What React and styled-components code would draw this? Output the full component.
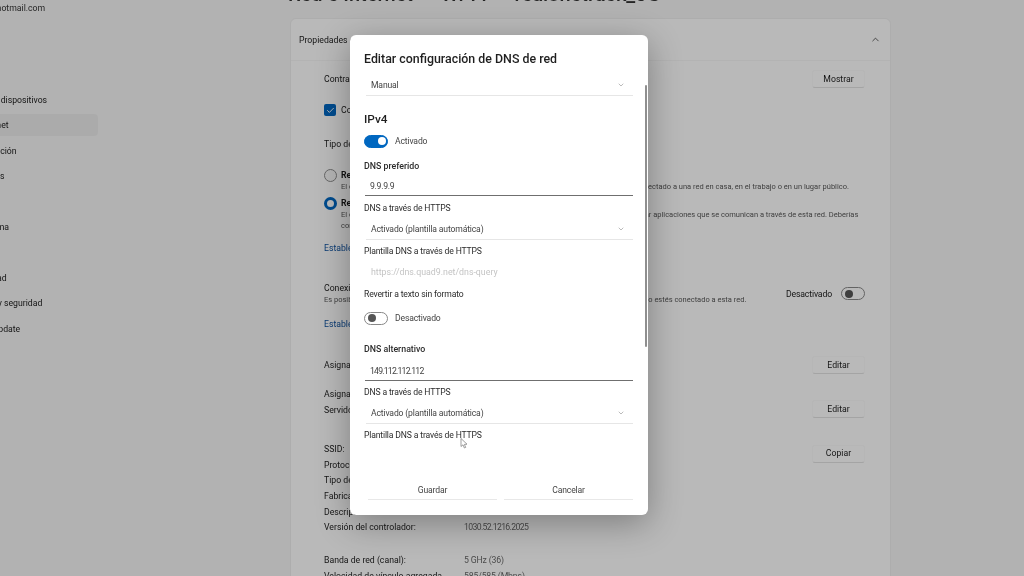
import React from 'react';
import styled, { createGlobalStyle } from 'styled-components';
import { Check, ChevronDown, ChevronUp } from 'lucide-react';

const GlobalStyle = createGlobalStyle`
  html, body {
    margin: 0;
    padding: 0;
    overflow: hidden;
    background: #f3f3f3;
  }
  * {
    box-sizing: border-box;
  }
`;

const Window = styled.div`
  position: relative;
  width: 1024px;
  height: 576px;
  overflow: hidden;
  display: grid;
  grid-template-columns: 290px 601px;
  background: #f3f3f3;
  color: #1b1b1b;
  font-family: Roboto, 'Open Sans', sans-serif;
  font-size: 8.7px;
  filter: blur(0.4px);
`;

/* sidebar, cut off by the left edge of the capture */
const Sidebar = styled.nav`
  overflow: hidden;
`;

const Account = styled.div`
  margin-left: -40px;
  padding-top: 2px;
  height: 14px;
  line-height: 12px;
  font-size: 8.7px;
  color: #333;
`;

const NavList = styled.div`
  margin-top: 75px;
  display: flex;
  flex-direction: column;
  gap: 3.4px;
`;

const NavItem = styled.div`
  width: 98px;
  height: 22px;
  display: flex;
  align-items: center;
  border-radius: 0 4px 4px 0;
  white-space: nowrap;
  font-size: 8.7px;
  background: ${(p) => (p.$active ? '#eaeaea' : 'transparent')};

  span {
    margin-left: -45px;
  }
`;

const Main = styled.main`
  display: flex;
  flex-direction: column;
  min-height: 0;
`;

const Breadcrumb = styled.h1`
  flex: none;
  margin: -19px 0 0 -2px;
  height: 37px;
  display: flex;
  gap: 28px;
  font-size: 20px;
  line-height: 27px;
  font-weight: 500;
  white-space: nowrap;
  color: #333;
`;

const Card = styled.section`
  flex: none;
  background: #fdfdfd;
  border-radius: 6px 6px 0 0;
  border: 1px solid #ececec;
  height: 640px;
`;

const CardHeader = styled.header`
  height: 42px;
  padding: 0 9px 0 8px;
  display: flex;
  align-items: center;
  justify-content: space-between;
  border-bottom: 1px solid #f4f4f4;
`;

const CardBody = styled.div`
  padding: 0 25px 0 33px;
  display: flex;
  flex-direction: column;
`;

const Row = styled.div`
  margin-top: ${(p) => p.$top || 0}px;
  display: flex;
  justify-content: space-between;
  align-items: ${(p) => p.$align || 'center'};
`;

const Line = styled.div`
  margin-top: ${(p) => p.$top || 0}px;
  height: 14px;
  line-height: 14px;
  white-space: nowrap;
`;

const CheckLine = styled(Line)`
  display: flex;
  align-items: center;
  gap: 5px;
`;

const CheckBox = styled.span`
  width: 12px;
  height: 12px;
  border-radius: 2px;
  background: #0067c0;
  color: #fff;
  display: flex;
  align-items: center;
  justify-content: center;
`;

const RadioRow = styled.div`
  margin-top: ${(p) => p.$top}px;
  display: grid;
  grid-template-columns: 12px 1fr;
  column-gap: 5px;
  align-items: start;
`;

const Radio = styled.span`
  width: 13px;
  height: 13px;
  border-radius: 50%;
  background: ${(p) => (p.$on ? '#fff' : '#f6f6f6')};
  border: ${(p) => (p.$on ? '3.5px solid #0067c0' : '1px solid #8c8c8c')};
`;

const OptionTitle = styled.div`
  line-height: 12px;
  font-weight: ${(p) => (p.$plain ? 400 : 700)};
`;

const Hint = styled.div`
  line-height: 11px;
  font-size: 7.5px;
  color: #555;
  white-space: nowrap;
`;

const LinkLine = styled(Line)`
  color: #0c4f9c;
`;

const Switch = styled.span`
  position: relative;
  flex: none;
  width: 24px;
  height: 13px;
  border-radius: 7px;
  border: 1px solid ${(p) => (p.$on ? '#0067c0' : '#888')};
  background: ${(p) => (p.$on ? '#0067c0' : 'transparent')};

  &::after {
    content: '';
    position: absolute;
    top: 1.5px;
    left: ${(p) => (p.$on ? '12.5px' : '2.5px')};
    width: 8px;
    height: 8px;
    border-radius: 50%;
    background: ${(p) => (p.$on ? '#fff' : '#555')};
  }
`;

const SwitchGroup = styled.div`
  display: flex;
  align-items: center;
  gap: 9px;
  letter-spacing: -0.15px;
`;

const Button = styled.button`
  width: 53px;
  height: 18px;
  padding: 0;
  border: 1px solid #f8f8f8;
  border-bottom-color: #e0e0e0;
  border-radius: 3px;
  background: #fdfdfd;
  color: #1b1b1b;
  font: inherit;
`;

const Stack = styled.div`
  line-height: 16px;
`;

const Details = styled.div`
  margin-top: ${(p) => p.$top}px;
  display: grid;
  grid-template-columns: 140px 1fr 53px;
  grid-auto-rows: 15.7px;
  line-height: 15.7px;
  white-space: nowrap;
`;

const Key = styled.span`
  grid-column: 1;
`;

const Value = styled.span`
  grid-column: 2;
  color: #666;
  letter-spacing: ${(p) => (p.$tight ? '-0.65px' : '-0.15px')};
`;

const DetailButton = styled(Button)`
  grid-column: 3;
  grid-row: 1 / 3;
  margin-top: 3px;
`;

/* dim layer and the dialog on top of it */
const Overlay = styled.div`
  position: absolute;
  inset: 0;
  background: rgba(0, 0, 0, 0.265);
`;

const Dialog = styled.div`
  position: absolute;
  left: 350px;
  top: 35px;
  width: 298px;
  height: 480px;
  background: #fff;
  border-radius: 6px;
  box-shadow: 0 8px 34px rgba(0, 0, 0, 0.32);
  padding: 14px 15px 15px 14px;
  display: flex;
  flex-direction: column;
  color: #1f1f1f;
`;

const DialogTitle = styled.h2`
  margin: 0;
  height: 20px;
  line-height: 20px;
  font-size: 12.4px;
  font-weight: 500;
  white-space: nowrap;
`;

const Scrollbar = styled.div`
  position: absolute;
  right: 1px;
  top: 50px;
  width: 2px;
  height: 262px;
  border-radius: 1px;
  background: #8f8f8f;
`;

const DialogBody = styled.div`
  flex: 1;
  display: flex;
  flex-direction: column;
`;

const SelectBox = styled.div`
  margin-top: ${(p) => p.$top}px;
  margin-left: 2px;
  height: 21px;
  padding: 0 8px 0 5px;
  display: flex;
  align-items: center;
  justify-content: space-between;
  border-bottom: 1px solid #e6e6e6;
  font-size: 8.6px;
  letter-spacing: -0.15px;
  color: #444;
`;

const Section = styled.div`
  margin-top: 15px;
  height: 16px;
  line-height: 16px;
  font-size: 11.8px;
  font-weight: 500;
`;

const SwitchRow = styled.div`
  margin-top: ${(p) => p.$top}px;
  height: 14px;
  display: flex;
  align-items: center;
  gap: 7px;
  font-size: 8.6px;
  letter-spacing: -0.15px;
  color: #444;
`;

const FieldLabel = styled.div`
  margin-top: ${(p) => p.$top}px;
  height: 14px;
  line-height: 14px;
  font-size: ${(p) => (p.$strong ? 8.8 : 8.6)}px;
  font-weight: ${(p) => (p.$strong ? 500 : 400)};
  letter-spacing: ${(p) => (p.$strong ? 0 : -0.15)}px;
  color: #2b2b2b;
  white-space: nowrap;
`;

const TextBox = styled.div`
  margin-top: ${(p) => p.$top}px;
  margin-left: 1px;
  height: ${(p) => p.$h}px;
  padding-left: 5px;
  display: flex;
  align-items: center;
  border-bottom: 1.5px solid #6f6f6f;
  font-size: 8.7px;
  letter-spacing: ${(p) => p.$track}px;
  color: #444;
`;

const Placeholder = styled.div`
  margin-top: 7px;
  height: 14px;
  line-height: 14px;
  padding-left: 7px;
  font-size: 8.8px;
  color: #c4c4c4;
`;

const Footer = styled.footer`
  margin-left: 4px;
  display: flex;
  gap: 7px;
`;

const FooterButton = styled.button`
  width: 129px;
  height: 19px;
  padding: 0;
  border: none;
  border-bottom: 1px solid #e8e8e8;
  background: #fff;
  color: #444;
  font: inherit;
  font-size: 8.6px;
  letter-spacing: -0.15px;
`;

const Cursor = styled.svg`
  position: absolute;
  left: 110px;
  top: 403px;
`;

const navItems = [
  'Bluetooth y dispositivos',
  'Red e Internet',
  'Personalización',
  'Aplicaciones',
  'Cuentas',
  'Hora e idioma',
  'Juegos',
  'Accesibilidad',
  'Privacidad y seguridad',
  'Windows Update',
];

const adapter = [
  ['Protocolo:', 'Wi-Fi 6'],
  ['Tipo de seguridad:', 'WPA2-Personal'],
  ['Fabricante:', 'Realtek'],
  ['Descripción:', 'Realtek Wireless LAN'],
];

export default function App() {
  return (
    <Window>
      <GlobalStyle />

      <Sidebar>
        <Account>usuario@hotmail.com</Account>
        <NavList>
          {navItems.map((item) => (
            <NavItem key={item} $active={item === 'Red e Internet'}>
              <span>{item}</span>
            </NavItem>
          ))}
        </NavList>
      </Sidebar>

      <Main>
        <Breadcrumb>
          <span>Red e Internet</span>
          <span>Wi-Fi</span>
          <span>realonetrack_5G</span>
        </Breadcrumb>
        <Card>
          <CardHeader>
            <span>Propiedades de Wi-Fi</span>
            <ChevronUp size={11} strokeWidth={1.5} />
          </CardHeader>
          <CardBody>
            <Row $top={9}>
              <span>Contraseña de red</span>
              <Button>Mostrar</Button>
            </Row>
            <CheckLine $top={15}>
              <CheckBox>
                <Check size={9} strokeWidth={2.5} />
              </CheckBox>
              Conectar automáticamente cuando esté en el intervalo
            </CheckLine>
            <Line $top={20}>Tipo de perfil de red</Line>

            <RadioRow $top={18}>
              <Radio />
              <div>
                <OptionTitle>Red pública (recomendado)</OptionTitle>
                <Hint>
                  El dispositivo no es detectable en la red. Úsalo en la mayoría de los casos: cuando estés conectado a una red en casa, en el trabajo o en un lugar público.
                </Hint>
              </div>
            </RadioRow>
            <RadioRow $top={5}>
              <Radio $on />
              <div>
                <OptionTitle>Red privada</OptionTitle>
                <Hint>
                  El dispositivo es detectable en la red. Úsalo si necesitas el uso compartido de archivos o usar aplicaciones que se comunican a través de esta red. Deberías
                </Hint>
                <Hint>conocer y confiar en las personas y dispositivos de la red.</Hint>
              </div>
            </RadioRow>
            <LinkLine $top={10}>Establecer la configuración del firewall</LinkLine>

            <Row $top={27}>
              <div>
                <OptionTitle $plain>Conexión de uso medido</OptionTitle>
                <Hint>
                  Es posible que algunas aplicaciones funcionen de otra manera para reducir el uso de datos cuando estés conectado a esta red.
                </Hint>
              </div>
              <SwitchGroup>
                Desactivado
                <Switch />
              </SwitchGroup>
            </Row>
            <LinkLine $top={12}>Establecer un límite de datos</LinkLine>

            <Row $top={25}>
              <span>Asignación de IP:</span>
              <Button>Editar</Button>
            </Row>
            <Row $top={12} $align="flex-end">
              <Stack>
                <div>Asignación de servidor DNS:</div>
                <div>Servidor DNS:</div>
              </Stack>
              <Button>Editar</Button>
            </Row>

            <Details $top={24}>
              <Key>SSID:</Key>
              <Value>realonetrack_5G</Value>
              <DetailButton>Copiar</DetailButton>
              {adapter.map(([key, value]) => (
                <React.Fragment key={key}>
                  <Key>{key}</Key>
                  <Value>{value}</Value>
                </React.Fragment>
              ))}
              <Key>Versión del controlador:</Key>
              <Value $tight>1030.52.1216.2025</Value>
            </Details>
            <Details $top={17}>
              <Key>Banda de red (canal):</Key>
              <Value>5 GHz (36)</Value>
              <Key>Velocidad de vínculo agregada</Key>
              <Value>585/585 (Mbps)</Value>
            </Details>
          </CardBody>
        </Card>
      </Main>

      <Overlay />

      <Dialog>
        <DialogTitle>Editar configuración de DNS de red</DialogTitle>
        <Scrollbar />
        <DialogBody>
          <SelectBox $top={6}>
            Manual
            <ChevronDown size={8} color="#999" />
          </SelectBox>

          <Section>IPv4</Section>
          <SwitchRow $top={7}>
            <Switch $on />
            Activado
          </SwitchRow>

          <FieldLabel $top={11} $strong>DNS preferido</FieldLabel>
          <TextBox $top={4} $h={19} $track={-0.3}>9.9.9.9</TextBox>
          <FieldLabel $top={5}>DNS a través de HTTPS</FieldLabel>
          <SelectBox $top={4}>
            Activado (plantilla automática)
            <ChevronDown size={8} color="#999" />
          </SelectBox>
          <FieldLabel $top={4}>Plantilla DNS a través de HTTPS</FieldLabel>
          <Placeholder>https://dns.quad9.net/dns-query</Placeholder>
          <FieldLabel $top={8}>Revertir a texto sin formato</FieldLabel>
          <SwitchRow $top={10}>
            <Switch />
            Desactivado
          </SwitchRow>

          <FieldLabel $top={17} $strong>DNS alternativo</FieldLabel>
          <TextBox $top={5} $h={20} $track={-0.8}>149.112.112.112</TextBox>
          <FieldLabel $top={4}>DNS a través de HTTPS</FieldLabel>
          <SelectBox $top={4}>
            Activado (plantilla automática)
            <ChevronDown size={8} color="#999" />
          </SelectBox>
          <FieldLabel $top={4}>Plantilla DNS a través de HTTPS</FieldLabel>
        </DialogBody>
        <Footer>
          <FooterButton>Guardar</FooterButton>
          <FooterButton>Cancelar</FooterButton>
        </Footer>
        <Cursor width="8" height="11" viewBox="0 0 8 11">
          <path d="M1 0.5 L1 8.5 L3 6.8 L4.4 10 L5.7 9.4 L4.4 6.4 L7 6.2 Z" fill="#fff" stroke="#777" strokeWidth="0.7" />
        </Cursor>
      </Dialog>
    </Window>
  );
}
